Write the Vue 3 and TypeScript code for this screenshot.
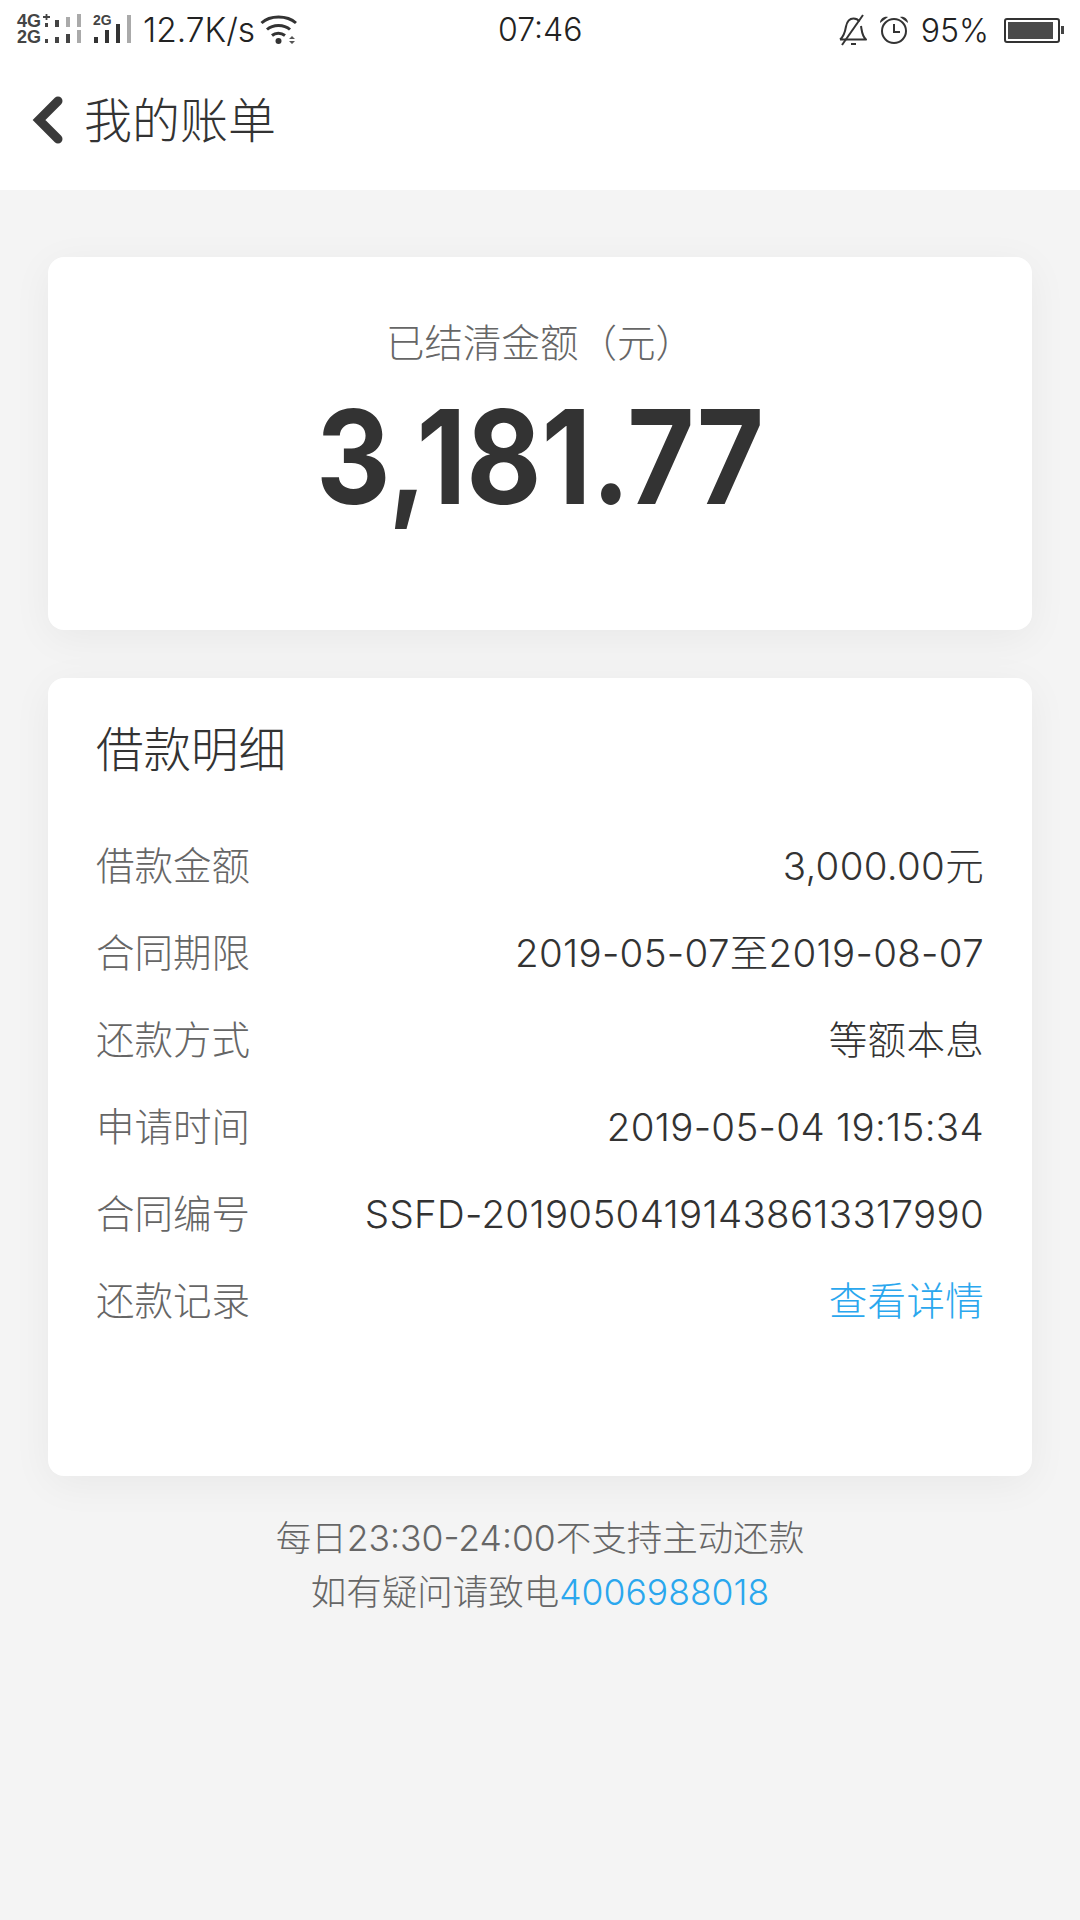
<template>
  <div class="page">
    <div class="status-bar">
      <svg class="net-icon" width="118" height="44" viewBox="14 6 118 44">
        <text x="17" y="25" class="sim-text">4G</text>
        <text x="17" y="41" class="sim-text">2G</text>
        <path d="M43 15h7M46.500 12v6" stroke="#444" stroke-width="1.800" fill="none" />
        <rect x="45" y="21" width="3" height="4" fill="#444" />
        <rect x="45" y="37" width="3" height="4" fill="#444" />
        <rect x="55" y="18" width="4" height="7" fill="#444" />
        <rect x="66" y="15" width="4" height="10" fill="#aaa" />
        <rect x="77" y="12" width="4" height="13" fill="#aaa" />
        <rect x="55" y="35" width="4" height="6" fill="#444" />
        <rect x="66" y="32" width="4" height="9" fill="#444" />
        <rect x="77" y="28" width="4" height="13" fill="#aaa" />
        <text x="93" y="23" class="sim-small">2G</text>
        <rect x="94" y="35" width="4" height="6" fill="#333" />
        <rect x="105" y="28" width="4" height="13" fill="#333" />
        <rect x="116" y="22" width="4" height="19" fill="#333" />
        <rect x="127" y="13" width="4" height="28" fill="#aaa" />
      </svg>
      <span class="speed">12.7K/s</span>
      <svg class="wifi" width="38" height="30" viewBox="0 0 38 30" fill="none" stroke="#333" stroke-width="3">
        <path d="M1.500 8C10 0 27 0 36 8" />
        <path d="M7 14.500C13 9 24 9 30 14.500" />
        <path d="M12 20.500C15.500 17.500 21 17.500 25 20.500" />
        <circle cx="18.500" cy="26" r="3" fill="#333" stroke="none" />
        <path d="M29 24l3-3 3 3zM29 26l3 3 3-3z" fill="#555" stroke="none" />
      </svg>
      <span class="clock">07:46</span>
      <div class="status-right">
        <svg class="bell" width="30" height="32" viewBox="0 0 30 32" fill="none" stroke="#333" stroke-width="2">
          <path d="M2 25.500c4-3 5-7 6-13 1-5 4-8 7.500-8 2.500 0 4.500 1 6 3M23 12c1 6 1 10 5 13.500H2" stroke-linejoin="round" />
          <path d="M4 31L25 1" />
          <path d="M13 30h5" />
        </svg>
        <svg class="alarm" width="30" height="30" viewBox="0 0 30 30" fill="none" stroke="#333" stroke-width="2">
          <circle cx="15" cy="16" r="12" />
          <path d="M15 9v8h6" />
          <path d="M1 8c0-4 4-7 8-6zM29 8c0-4-4-7-8-6z" fill="#333" stroke="none" />
        </svg>
        <span class="percent">95%</span>
        <div class="battery">
          <div class="battery-body"><div class="battery-fill"></div></div>
          <div class="battery-tip"></div>
        </div>
      </div>
    </div>

    <header class="nav">
      <svg class="back" width="32" height="48" viewBox="0 0 32 48" fill="none">
        <path d="M26 5L7 24l19 19" stroke="#3a3a3a" stroke-width="9" stroke-linecap="round" />
      </svg>
      <h1 class="title">我的账单</h1>
    </header>

    <main class="content">
      <section class="card summary">
        <p class="summary-label">已结清金额（元）</p>
        <p class="summary-amount">3,181.77</p>
      </section>

      <section class="card detail">
        <h2 class="detail-title">借款明细</h2>
        <div v-for="row in rows" :key="row.label" class="row">
          <span class="row-label">{{ row.label }}</span>
          <span class="row-value" :class="{ link: row.link }">{{ row.value }}</span>
        </div>
      </section>

      <div class="notice">
        <p>每日23:30-24:00不支持主动还款</p>
        <p>如有疑问请致电<span class="link">4006988018</span></p>
      </div>
    </main>
  </div>
</template>

<script setup lang="ts">
interface DetailRow {
  label: string;
  value: string;
  link?: boolean;
}

const rows: DetailRow[] = [
  { label: "借款金额", value: "3,000.00元" },
  { label: "合同期限", value: "2019-05-07至2019-08-07" },
  { label: "还款方式", value: "等额本息" },
  { label: "申请时间", value: "2019-05-04 19:15:34" },
  { label: "合同编号", value: "SSFD-20190504191438613317990" },
  { label: "还款记录", value: "查看详情", link: true },
];
</script>

<style>
html,
body {
  margin: 0;
  background: #f4f4f4;
}
</style>

<style scoped>
.page {
  width: 1080px;
  height: 1920px;
  background: #f4f4f4;
  font-family: "Inter", "Noto Sans CJK SC", sans-serif;
  font-weight: 300;
  overflow: hidden;
}
p,
h1,
h2 {
  margin: 0;
  font-weight: 300;
}
.status-bar {
  height: 60px;
  background: #fff;
  display: flex;
  align-items: center;
  padding: 0 16px 0 14px;
  box-sizing: border-box;
  color: #222;
}
.sim-text {
  font: 700 18px "Liberation Sans", sans-serif;
  fill: #444;
}
.sim-small {
  font: 700 14px "Liberation Sans", sans-serif;
  fill: #444;
}
.speed {
  font-size: 33.5px;
  margin-left: 11px;
  width: 115px;
}
.wifi {
  margin-left: 2px;
}
.clock {
  font-size: 32px;
  margin: -2px 0 0 200px;
}
.status-right {
  display: flex;
  align-items: center;
  margin-left: auto;
}
.alarm {
  margin-left: 11px;
}
.percent {
  font-size: 32px;
  margin: 0 15px 0 12px;
}
.battery {
  display: flex;
  align-items: center;
}
.battery-body {
  width: 56px;
  height: 25px;
  border: 2px solid #333;
  border-radius: 3px;
  padding: 2px;
  box-sizing: border-box;
}
.battery-fill {
  width: 94%;
  height: 100%;
  background: #4a4a4a;
}
.battery-tip {
  width: 3px;
  height: 8px;
  background: #444;
  margin-left: 1px;
}
.nav {
  height: 130px;
  background: #fff;
  padding: 0 0 10px 32px;
  box-sizing: border-box;
  display: flex;
  align-items: center;
}
.title {
  font-size: 48px;
  line-height: 60px;
  color: #333;
  margin: 1px 0 0 20px;
}
.content {
  padding: 67px 48px 0;
}
.card {
  background: #fff;
  border-radius: 16px;
  box-shadow: 0 8px 40px rgba(0, 0, 0, 0.05);
}
.summary {
  height: 373px;
  text-align: center;
  padding-top: 58px;
  box-sizing: border-box;
}
.summary-label {
  font-size: 38.5px;
  line-height: 56px;
  color: #666;
}
.summary-amount {
  font-weight: 700;
  font-size: 130px;
  line-height: 130px;
  color: #333;
  margin-top: 21px;
  transform: scaleX(0.89);
}
.detail {
  margin-top: 48px;
  height: 798px;
  padding: 38px 48px 0;
  box-sizing: border-box;
}
.detail-title {
  font-size: 47.5px;
  line-height: 68px;
  color: #333;
  margin-bottom: 39px;
}
.row {
  height: 87px;
  line-height: 87px;
  display: flex;
  align-items: baseline;
  justify-content: space-between;
  font-size: 38.5px;
}
.row-label {
  color: #666;
}
.row-value {
  color: #333;
  letter-spacing: 0.3px;
}
.link {
  color: #2aa7ee;
}
.notice {
  margin-top: 36px;
  text-align: center;
  font-size: 35.5px;
  line-height: 54px;
  color: #666;
}
</style>
